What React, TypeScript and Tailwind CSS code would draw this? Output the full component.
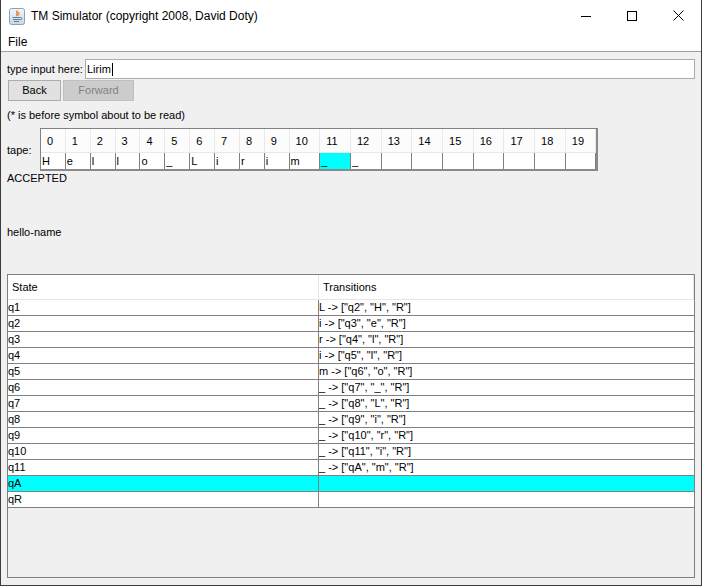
import React from "react";

const tapeTop = Array.from({ length: 20 }, (_, i) => String(i));
const tapeBottom = ["H", "e", "l", "l", "o", "_", "L", "i", "r", "i", "m", "_", "_", "", "", "", "", "", "", ""];

const rows: [string, string][] = [
  ["q1", 'L -> ["q2", "H", "R"]'],
  ["q2", 'i -> ["q3", "e", "R"]'],
  ["q3", 'r -> ["q4", "l", "R"]'],
  ["q4", 'i -> ["q5", "l", "R"]'],
  ["q5", 'm -> ["q6", "o", "R"]'],
  ["q6", '_ -> ["q7", "_", "R"]'],
  ["q7", '_ -> ["q8", "L", "R"]'],
  ["q8", '_ -> ["q9", "i", "R"]'],
  ["q9", '_ -> ["q10", "r", "R"]'],
  ["q10", '_ -> ["q11", "i", "R"]'],
  ["q11", '_ -> ["qA", "m", "R"]'],
  ["qA", ""],
  ["qR", ""],
];

function JavaIcon() {
  return (
    <svg width="16" height="17" viewBox="0 0 16 17">
      <defs>
        <linearGradient id="jg" x1="0" y1="0" x2="0" y2="1">
          <stop offset="0" stopColor="#f4f7fa" />
          <stop offset="1" stopColor="#c9d5e2" />
        </linearGradient>
      </defs>
      <rect x="0.5" y="0.5" width="15" height="16" rx="2" fill="url(#jg)" stroke="#8da2b8" />
      <path d="M8.5 2.5 C6.5 4.5 9.5 5.5 7.5 8" stroke="#e76f00" strokeWidth="1.3" fill="none" />
      <path d="M10 4 C9 5.5 10.5 6 9.5 7.5" stroke="#e76f00" strokeWidth="1" fill="none" />
      <path d="M3.5 9.5 H11.5 M4 11.5 H11 M5 13.5 H10" stroke="#5382a1" strokeWidth="1.2" />
      <path d="M11.5 9.5 C13.5 9.5 13.5 11.5 11 11.8" stroke="#5382a1" strokeWidth="1" fill="none" />
    </svg>
  );
}

export default function App() {
  return (
    <div className="w-[702px] h-[586px] bg-[#f0f0f0] border-l border-r border-b border-[#3c3c3c] flex flex-col font-['Liberation_Sans',Arial,sans-serif] text-[11px] text-black overflow-hidden">
      {/* title bar */}
      <div className="h-[31px] bg-white flex items-center shrink-0">
        <div className="ml-[8px] mt-[1px] flex items-center">
          <JavaIcon />
        </div>
        <span className="ml-[6px] text-[12px] leading-none">TM Simulator (copyright 2008, David Doty)</span>
        <div className="ml-auto flex h-full">
          <div className="w-[46px] h-full flex items-center justify-center">
            <svg width="10" height="10" viewBox="0 0 10 10">
              <path d="M0 5.5 H10" stroke="#000" strokeWidth="1" />
            </svg>
          </div>
          <div className="w-[46px] h-full flex items-center justify-center">
            <svg width="10" height="10" viewBox="0 0 10 10">
              <rect x="0.5" y="0.5" width="9" height="9" stroke="#000" strokeWidth="1" fill="none" />
            </svg>
          </div>
          <div className="w-[46px] h-full flex items-center justify-center">
            <svg width="11" height="11" viewBox="0 0 11 11">
              <path d="M0.5 0.5 L10.5 10.5 M10.5 0.5 L0.5 10.5" stroke="#000" strokeWidth="1" />
            </svg>
          </div>
        </div>
      </div>
      {/* menu bar */}
      <div className="h-[21px] bg-white border-b border-[#a0a0a0] flex items-center shrink-0 pt-[2px]">
        <span className="ml-[7px] text-[12px] leading-none">File</span>
      </div>
      {/* content */}
      <div className="flex-1 flex flex-col pl-[6px] pr-[6px] pt-[7px] pb-[7px] min-h-0">
        <div className="flex items-center h-[20px]">
          <span className="w-[78px] shrink-0">type input here:</span>
          <div className="flex-1 h-[20px] bg-white border border-[#acacac] flex items-center pl-[1px]">
            <span>Lirim</span>
            <span className="w-px h-[13px] bg-black ml-[1px]" />
          </div>
        </div>
        <div className="flex mt-[1px] h-[21px] gap-[2px] pl-[1px]">
          <div className="w-[53px] bg-[#e1e1e1] border border-[#adadad] flex items-center justify-center">Back</div>
          <div className="w-[71px] bg-[#cccccc] border border-[#bfbfbf] text-[#838383] flex items-center justify-center">Forward</div>
        </div>
        <div className="mt-[7px] h-[14px] leading-[14px]">(* is before symbol about to be read)</div>
        <div className="mt-[6px] flex items-center">
          <span className="w-[33px] shrink-0 pt-[1px]">tape:</span>
          <div className="border-l border-t border-[#828282] border-r-2 border-b-2 border-r-[#8a8a8a] border-b-[#8a8a8a]">
            <div className="grid grid-cols-[repeat(10,24.87px)_repeat(10,30.7px)] bg-[#fcfcfc]">
              {tapeTop.map((t, i) => (
                <div key={i} className="h-[24px] border-r border-b border-[#e9e9e9] flex items-center pl-[6px] pt-[2px]">
                  {t}
                </div>
              ))}
            </div>
            <div className="grid grid-cols-[repeat(10,24.87px)_repeat(10,30.7px)] bg-white">
              {tapeBottom.map((t, i) => (
                <div
                  key={i}
                  className={`h-[16px] border-r border-[#808080] flex items-center pl-[1px] ${i === 11 ? "bg-[#00ffff]" : ""}`}
                >
                  {t}
                </div>
              ))}
            </div>
          </div>
        </div>
        <div className="h-[14px] leading-[14px]">ACCEPTED</div>
        <div className="mt-[40px] h-[14px] leading-[14px]">hello-name</div>
        <div className="mt-[35px] flex-1 border border-[#808080] bg-[#f0f0f0] flex flex-col">
          <div className="flex h-[25px] bg-white border-b border-[#e5e5e5] border-r border-r-[#e5e5e5]">
            <div className="w-[311px] border-r border-[#e5e5e5] flex items-center pl-[4px] pt-[1px]">State</div>
            <div className="flex-1 flex items-center pl-[4px] pt-[1px]">Transitions</div>
          </div>
          {rows.map(([s, t], i) => (
            <div key={i} className={`flex h-[16px] border-b border-[#808080] ${s === "qA" ? "bg-[#00ffff]" : "bg-white"}`}>
              <div className="w-[311px] border-r border-[#808080] flex items-center leading-none">{s}</div>
              <div className="flex-1 flex items-center leading-none">{t}</div>
            </div>
          ))}
        </div>
      </div>
    </div>
  );
}
